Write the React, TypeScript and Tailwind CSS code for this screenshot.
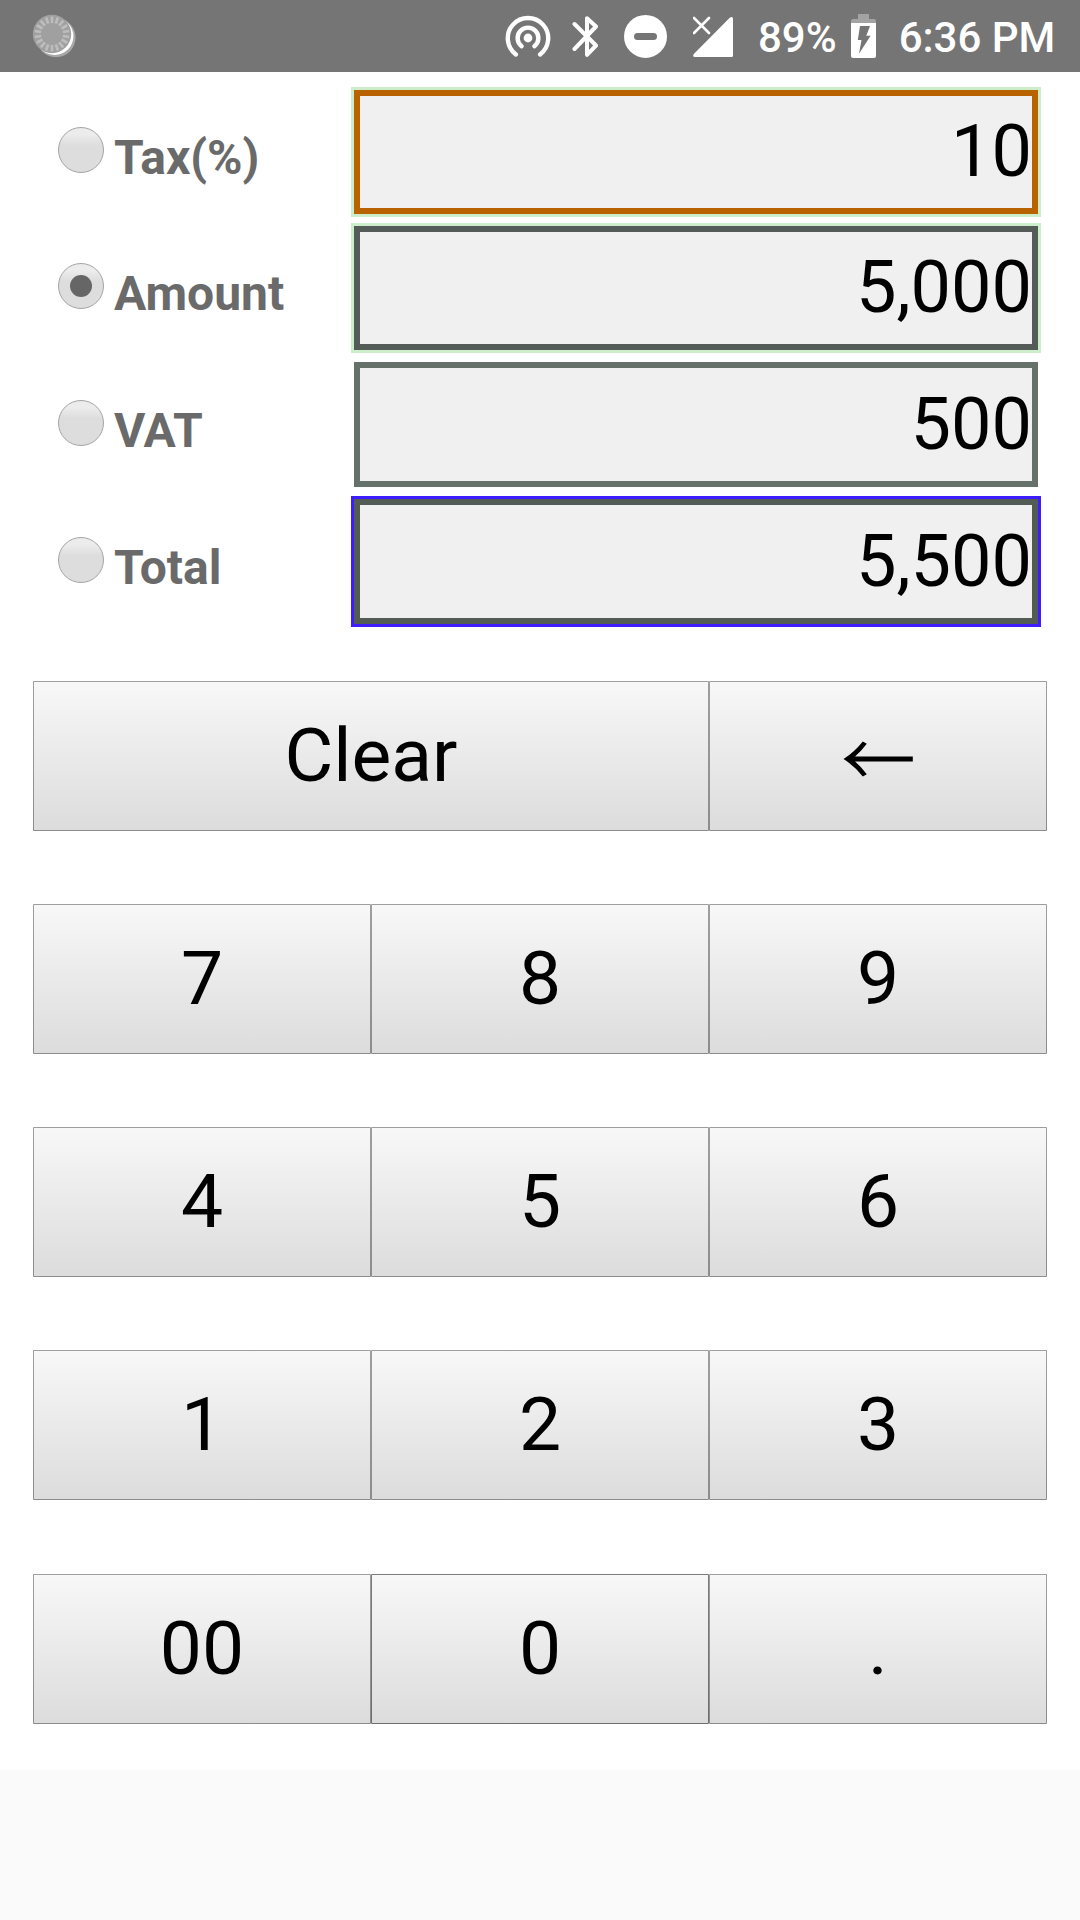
import { useState } from "react";
import clsx from "clsx";

interface Field {
	id: string;
	label: string;
	value: string;
	row: string;
	box: string;
}

interface Key {
	label: string;
	wide?: boolean;
	focused?: boolean;
}

const FIELDS: Field[] = [
	{
		id: "tax",
		label: "Tax(%)",
		value: "10",
		row: "h-[124px] mb-3",
		box: "border-[#b96200] outline-3 outline-[#cdeecb]",
	},
	{
		id: "amount",
		label: "Amount",
		value: "5,000",
		row: "h-[124px] mb-3",
		box: "border-[#535c57] outline-3 outline-[#cdeecb]",
	},
	{
		id: "vat",
		label: "VAT",
		value: "500",
		row: "h-[125px] mb-3",
		box: "border-[#66716a]",
	},
	{
		id: "total",
		label: "Total",
		value: "5,500",
		row: "h-[125px]",
		box: "border-[#535b55] outline-3 outline-[#3d1dff]",
	},
];

const ROWS: Key[][] = [
	[{ label: "Clear", wide: true }, { label: "←" }],
	[{ label: "7" }, { label: "8" }, { label: "9" }],
	[{ label: "4" }, { label: "5" }, { label: "6" }],
	[{ label: "1" }, { label: "2" }, { label: "3" }],
	[{ label: "00" }, { label: "0", focused: true }, { label: "." }],
];

function Spinner() {
	const ticks = Array.from({ length: 18 }, (_, i) => i * 20);
	return (
		<svg className="ml-8 h-12 w-12" viewBox="0 0 48 48" fill="none">
			<circle cx="24" cy="25.6" r="19.6" fill="#a8a8a8" />
			<circle cx="22.6" cy="24.2" r="18.8" fill="#fff" />
			<circle cx="20" cy="22" r="19.2" fill="#a0a0a0" />
			{ticks.map((angle) => (
				<path
					key={angle}
					d="M20 4.5v6.5"
					stroke="#bdbdbd"
					strokeWidth="2.6"
					transform={`rotate(${angle} 20 22)`}
				/>
			))}
		</svg>
	);
}

function StatusBar() {
	return (
		<header className="flex h-[72px] items-center bg-[#757575] text-[42px] leading-none font-medium text-white">
			<Spinner />
			<svg
				className="ml-[425px] h-[44px] w-[46px]"
				viewBox="0 0 46 44"
				fill="none"
				stroke="#fff"
				strokeLinecap="round"
			>
				<circle cx="23" cy="24" r="4.4" fill="#fff" stroke="none" />
				<path d="M16.6 32.2A10.4 10.4 0 1 1 29.4 32.2" strokeWidth="4.4" />
				<path d="M10.9 40.4A20.2 20.2 0 1 1 35.1 40.4" strokeWidth="4.4" />
			</svg>
			<svg
				className="ml-[21px] h-[44px] w-[27px]"
				viewBox="0 0 27 44"
				fill="none"
				stroke="#fff"
				strokeWidth="4"
				strokeLinecap="round"
				strokeLinejoin="round"
			>
				<path d="M2.5 10 L24 31.5 L15 40.8 V4.2 L24 12.5 L2.5 35" />
			</svg>
			<svg className="ml-[25px] h-[44px] w-[43px]" viewBox="0 0 43 44">
				<circle cx="21.5" cy="22.4" r="21.5" fill="#fff" />
				<rect x="10" y="19" width="23" height="7" rx="3.5" fill="#757575" />
			</svg>
			<svg className="ml-[26px] h-[44px] w-[40px]" viewBox="0 0 40 44">
				<path
					d="M37 3.5Q40 2 40 5V41.5Q40 43 38.5 43H2Q-1 43 0.8 40Z"
					fill="#fff"
				/>
				<path
					d="M1 4 16 19M16 4 1 19"
					stroke="#fff"
					strokeWidth="2.6"
					strokeLinecap="round"
				/>
			</svg>
			<span className="ml-[25px] pt-[3px]">89%</span>
			<svg className="ml-[14px] h-[44px] w-[25px]" viewBox="0 0 25 44">
				<path
					d="M7 0H18V5H23Q25 5 25 7V9H0V7Q0 5 2 5H7Z"
					fill="#a3a3a3"
				/>
				<path d="M0 9H25V42Q25 44 23 44H2Q0 44 0 42Z" fill="#fff" />
				<path d="M9 12H19L15.3 21.7H19.6L8 39.8L10.5 26H6.8Z" fill="#757575" />
			</svg>
			<span className="ml-[23px] pt-[3px]">6:36 PM</span>
		</header>
	);
}

function Radio({ checked, onSelect }: { checked: boolean; onSelect: () => void }) {
	return (
		<button
			type="button"
			role="radio"
			aria-checked={checked}
			onClick={onSelect}
			className="flex size-[46px] items-center justify-center rounded-full border border-[#a4a4a4] bg-linear-to-b from-[#ececec] from-15% to-[#dddddd] to-40%"
		>
			{checked ? <span className="size-[22px] rounded-full bg-[#666]" /> : null}
		</button>
	);
}

function BackArrow() {
	return (
		<svg
			className="mx-auto mt-[8px] h-[36px] w-[70px]"
			viewBox="0 0 70 36"
			aria-label="←"
		>
			<path d="M0.5 18Q11 11.5 19.8 0.5L23.8 2.8Q18 10.5 12 15.5H69.8V20.5H12Q18 25.5 23.8 33.2L19.8 35.5Q11 24.5 0.5 18Z" />
		</svg>
	);
}

export default function App() {
	const [selected, setSelected] = useState("amount");

	return (
		<div className="flex h-[1920px] w-[1080px] flex-col bg-[#fafafa] font-[Roboto,sans-serif]">
			<StatusBar />
			<main className="h-[1698px] bg-white pt-[18px]">
				<section>
					{FIELDS.map((field) => (
						<div key={field.id} className={clsx("flex pl-[58px]", field.row)}>
							<div className="flex w-[296px] items-center gap-[10px] pb-1">
								<Radio
									checked={selected === field.id}
									onSelect={() => setSelected(field.id)}
								/>
								<span className="pt-[16px] text-[48px] leading-[46px] font-bold text-[#6a6a6a]">
									{field.label}
								</span>
							</div>
							<div
								className={clsx(
									"flex w-[684px] items-center justify-end border-6 bg-[#f0f0f0] text-[72px] leading-[84px] text-black",
									field.box,
								)}
							>
								{field.value}
							</div>
						</div>
					))}
				</section>

				<section className="mx-[33px] mt-[57px] flex flex-col gap-[73px]">
					{ROWS.map((row) => (
						<div key={row[0].label} className="flex h-[150px] last:mt-px">
							{row.map((key) => (
								<button
									key={key.label}
									type="button"
									className={clsx(
										"rounded-[1px] border bg-linear-to-b from-[#f8f8f8] to-[#dcdcdc] bg-origin-border pb-[2px] text-[75px] leading-[88px] text-black",
										key.wide ? "w-[676px]" : "w-[338px]",
										key.focused ? "border-black/50" : "border-black/36",
									)}
								>
									{key.label === "←" ? <BackArrow /> : key.label}
								</button>
							))}
						</div>
					))}
				</section>
			</main>
		</div>
	);
}
